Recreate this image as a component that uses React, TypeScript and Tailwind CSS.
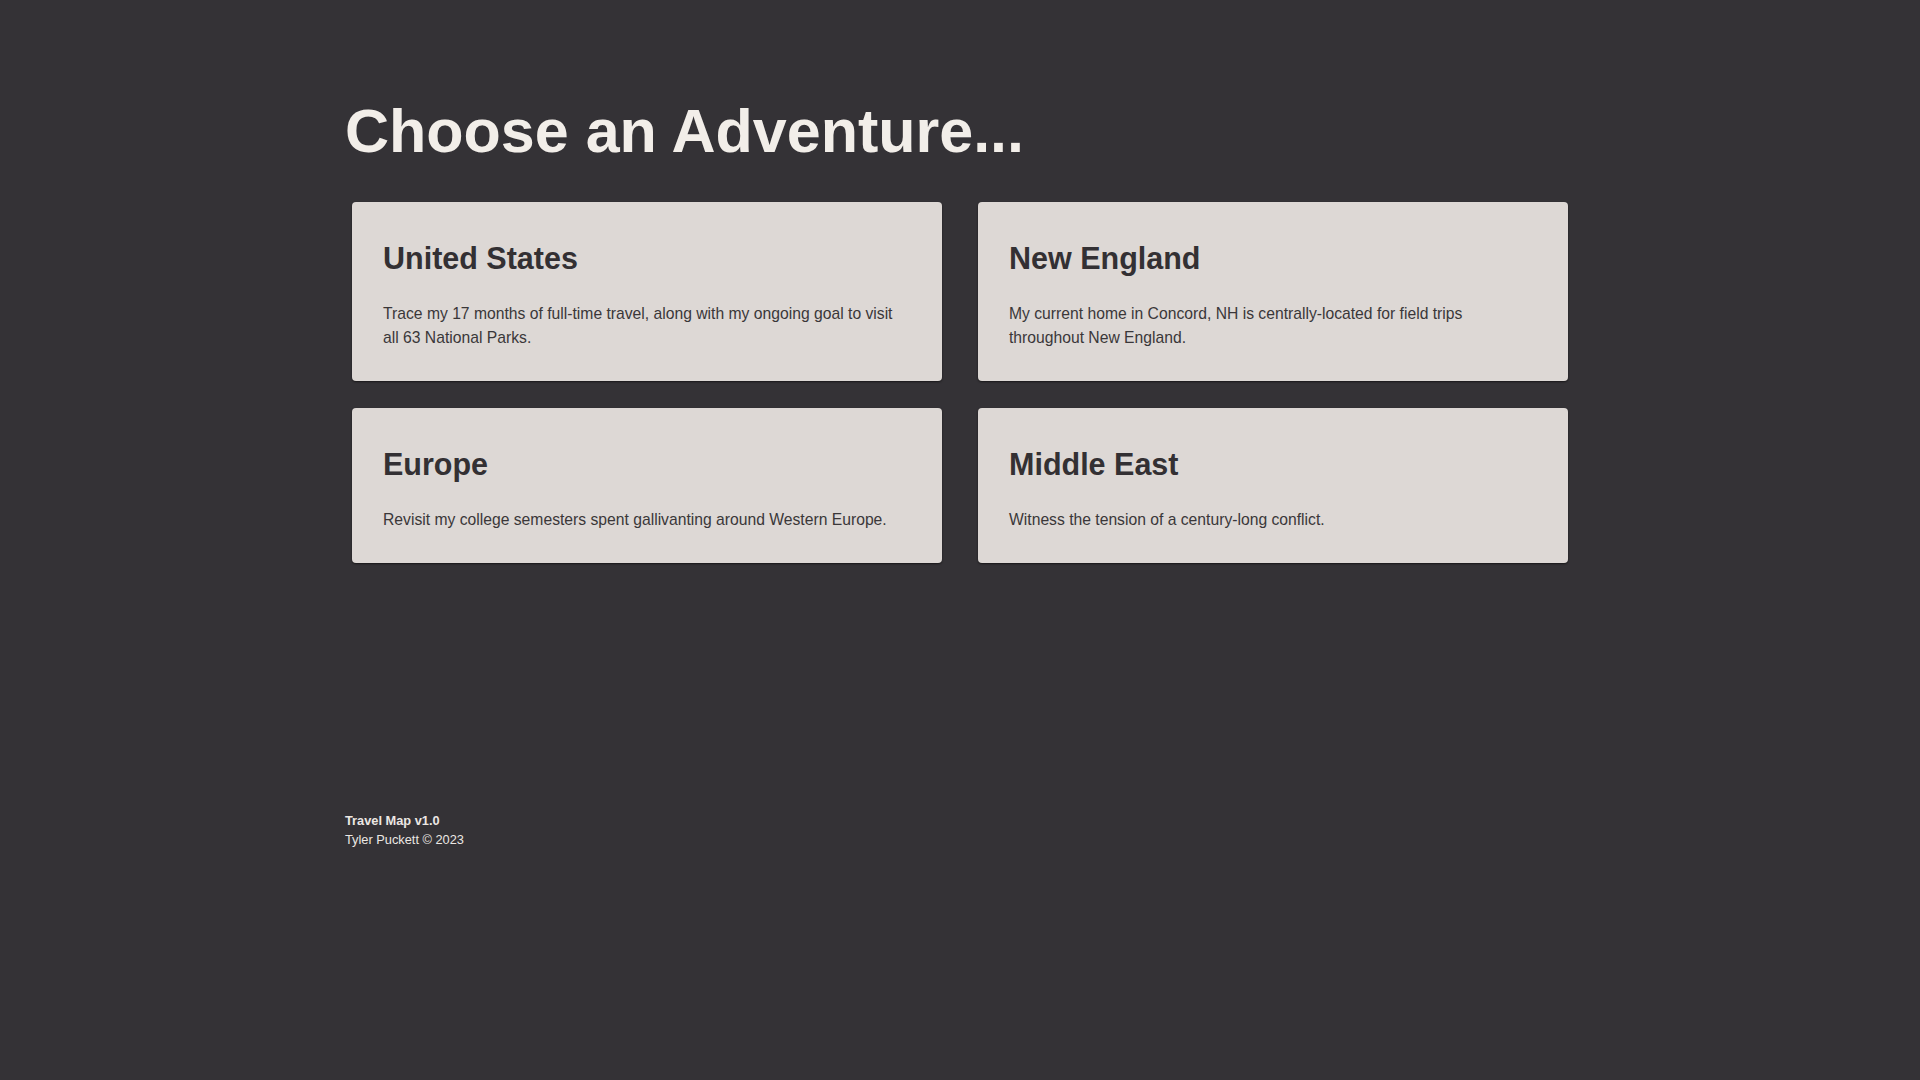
const adventures = [
  {
    title: 'United States',
    text: 'Trace my 17 months of full-time travel, along with my ongoing goal to visit all 63 National Parks.',
  },
  {
    title: 'New England',
    text: 'My current home in Concord, NH is centrally-located for field trips throughout New England.',
  },
  {
    title: 'Europe',
    text: 'Revisit my college semesters spent gallivanting around Western Europe.',
  },
  {
    title: 'Middle East',
    text: 'Witness the tension of a century-long conflict.',
  },
];

function AdventureCard({ title, text }: { title: string; text: string }) {
  return (
    <a
      href="#"
      className="block rounded-[4px] bg-[#ddd8d5] px-[31px] pt-[38px] pb-[31px] shadow-[0_1px_2px_rgba(0,0,0,0.55)]"
    >
      <h2 className="text-[30.5px] leading-[36px] font-bold text-[#333033]">{title}</h2>
      <p className="mt-[26px] pr-[8px] text-[15.7px] leading-[24px] text-[#3a3739]">{text}</p>
    </a>
  );
}

export default function App() {
  return (
    <div
      className="min-h-screen bg-[#343236]"
      style={{ fontFamily: '"Liberation Sans", Arial, sans-serif' }}
    >
      <div className="mx-auto w-[1230px] pt-[95px]">
        <h1 className="text-[61px] leading-[72px] font-bold text-[#f2eee9]">Choose an Adventure...</h1>
        <div className="mt-[35px] grid grid-cols-2 gap-x-[36px] gap-y-[27px] px-[7px]">
          {adventures.map((a) => (
            <AdventureCard key={a.title} title={a.title} text={a.text} />
          ))}
        </div>
        <footer className="mt-[248px] text-[12.8px] leading-[19.2px] text-[#ebe7e3]">
          <div className="font-bold">Travel Map v1.0</div>
          <div>Tyler Puckett © 2023</div>
        </footer>
      </div>
    </div>
  );
}
